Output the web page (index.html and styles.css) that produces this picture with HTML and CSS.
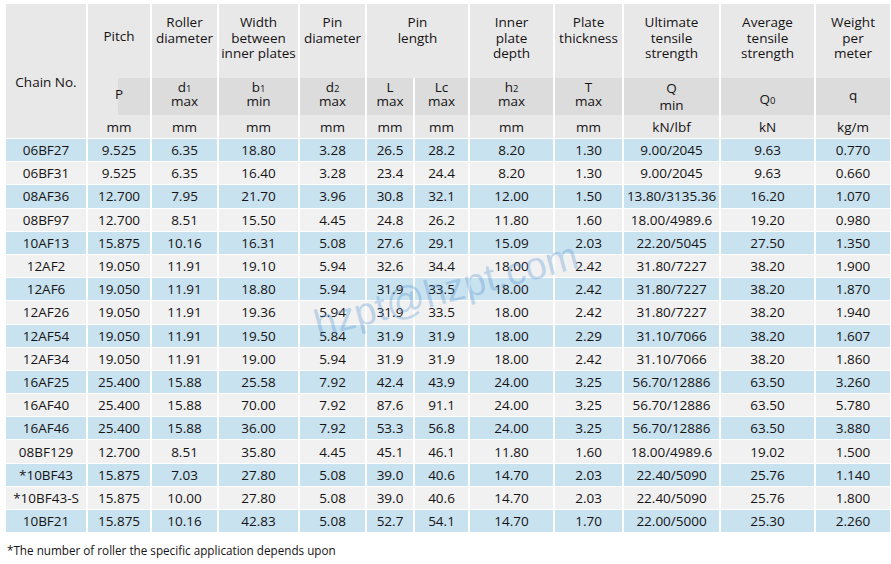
FILE: index.html
```html
<!DOCTYPE html>
<html lang="en">
<head>
<meta charset="utf-8">
<title>Chain specifications</title>
<link rel="stylesheet" href="styles.css">
</head>
<body>
<div class="page">
  <table class="spec">
    <colgroup>
      <col class="c-chain"><col class="c-pitch"><col class="c-roller"><col class="c-width"><col class="c-pin"><col class="c-l"><col class="c-lc"><col class="c-inner"><col class="c-plate"><col class="c-ult"><col class="c-avg"><col class="c-weight">
    </colgroup>
    <thead>
      <tr class="r-title">
        <th rowspan="3" class="chain">Chain No.</th>
        <th class="pitch">Pitch</th>
        <th>Roller<br>diameter</th>
        <th>Width<br>between<br>inner plates</th>
        <th>Pin<br>diameter</th>
        <th colspan="2">Pin<br>length</th>
        <th>Inner<br>plate<br>depth</th>
        <th>Plate<br>thickness</th>
        <th>Ultimate<br>tensile<br>strength</th>
        <th>Average<br>tensile<br>strength</th>
        <th class="last">Weight<br>per<br>meter</th>
      </tr>
      <tr class="r-sym">
        <th class="sym-p">P</th>
        <th>d<sub>1</sub><br>max</th>
        <th>b<sub>1</sub><br>min</th>
        <th>d<sub>2</sub><br>max</th>
        <th>L<br>max</th>
        <th>Lc<br>max</th>
        <th>h<sub>2</sub><br>max</th>
        <th>T<br>max</th>
        <th class="sym-q">Q<br>min</th>
        <th class="sym-q0">Q<sub>0</sub></th>
        <th class="sym-lq last">q</th>
      </tr>
      <tr class="r-unit">
        <th>mm</th><th>mm</th><th>mm</th><th>mm</th><th>mm</th><th>mm</th><th>mm</th><th>mm</th><th>kN/lbf</th><th>kN</th><th class="last">kg/m</th>
      </tr>
    </thead>
    <tbody>
      <tr><td>06BF27</td><td>9.525</td><td>6.35</td><td>18.80</td><td>3.28</td><td>26.5</td><td>28.2</td><td>8.20</td><td>1.30</td><td>9.00/2045</td><td>9.63</td><td>0.770</td></tr>
      <tr><td>06BF31</td><td>9.525</td><td>6.35</td><td>16.40</td><td>3.28</td><td>23.4</td><td>24.4</td><td>8.20</td><td>1.30</td><td>9.00/2045</td><td>9.63</td><td>0.660</td></tr>
      <tr><td>08AF36</td><td>12.700</td><td>7.95</td><td>21.70</td><td>3.96</td><td>30.8</td><td>32.1</td><td>12.00</td><td>1.50</td><td>13.80/3135.36</td><td>16.20</td><td>1.070</td></tr>
      <tr><td>08BF97</td><td>12.700</td><td>8.51</td><td>15.50</td><td>4.45</td><td>24.8</td><td>26.2</td><td>11.80</td><td>1.60</td><td>18.00/4989.6</td><td>19.20</td><td>0.980</td></tr>
      <tr><td>10AF13</td><td>15.875</td><td>10.16</td><td>16.31</td><td>5.08</td><td>27.6</td><td>29.1</td><td>15.09</td><td>2.03</td><td>22.20/5045</td><td>27.50</td><td>1.350</td></tr>
      <tr><td>12AF2</td><td>19.050</td><td>11.91</td><td>19.10</td><td>5.94</td><td>32.6</td><td>34.4</td><td>18.00</td><td>2.42</td><td>31.80/7227</td><td>38.20</td><td>1.900</td></tr>
      <tr><td>12AF6</td><td>19.050</td><td>11.91</td><td>18.80</td><td>5.94</td><td>31.9</td><td>33.5</td><td>18.00</td><td>2.42</td><td>31.80/7227</td><td>38.20</td><td>1.870</td></tr>
      <tr><td>12AF26</td><td>19.050</td><td>11.91</td><td>19.36</td><td>5.94</td><td>31.9</td><td>33.5</td><td>18.00</td><td>2.42</td><td>31.80/7227</td><td>38.20</td><td>1.940</td></tr>
      <tr><td>12AF54</td><td>19.050</td><td>11.91</td><td>19.50</td><td>5.84</td><td>31.9</td><td>31.9</td><td>18.00</td><td>2.29</td><td>31.10/7066</td><td>38.20</td><td>1.607</td></tr>
      <tr><td>12AF34</td><td>19.050</td><td>11.91</td><td>19.00</td><td>5.94</td><td>31.9</td><td>31.9</td><td>18.00</td><td>2.42</td><td>31.10/7066</td><td>38.20</td><td>1.860</td></tr>
      <tr><td>16AF25</td><td>25.400</td><td>15.88</td><td>25.58</td><td>7.92</td><td>42.4</td><td>43.9</td><td>24.00</td><td>3.25</td><td>56.70/12886</td><td>63.50</td><td>3.260</td></tr>
      <tr><td>16AF40</td><td>25.400</td><td>15.88</td><td>70.00</td><td>7.92</td><td>87.6</td><td>91.1</td><td>24.00</td><td>3.25</td><td>56.70/12886</td><td>63.50</td><td>5.780</td></tr>
      <tr><td>16AF46</td><td>25.400</td><td>15.88</td><td>36.00</td><td>7.92</td><td>53.3</td><td>56.8</td><td>24.00</td><td>3.25</td><td>56.70/12886</td><td>63.50</td><td>3.880</td></tr>
      <tr><td>08BF129</td><td>12.700</td><td>8.51</td><td>35.80</td><td>4.45</td><td>45.1</td><td>46.1</td><td>11.80</td><td>1.60</td><td>18.00/4989.6</td><td>19.02</td><td>1.500</td></tr>
      <tr><td>*10BF43</td><td>15.875</td><td>7.03</td><td>27.80</td><td>5.08</td><td>39.0</td><td>40.6</td><td>14.70</td><td>2.03</td><td>22.40/5090</td><td>25.76</td><td>1.140</td></tr>
      <tr><td>*10BF43-S</td><td>15.875</td><td>10.00</td><td>27.80</td><td>5.08</td><td>39.0</td><td>40.6</td><td>14.70</td><td>2.03</td><td>22.40/5090</td><td>25.76</td><td>1.800</td></tr>
      <tr><td>10BF21</td><td>15.875</td><td>10.16</td><td>42.83</td><td>5.08</td><td>52.7</td><td>54.1</td><td>14.70</td><td>1.70</td><td>22.00/5000</td><td>25.30</td><td>2.260</td></tr>
    </tbody>
  </table>
  <p class="note">*The number of roller the specific application depends upon</p>
  <div class="watermark">hzpt@hzpt.com</div>
</div>
</body>
</html>
```

FILE: styles.css
```css
html, body {
  margin: 0;
  padding: 0;
  background: #ffffff;
}

body {
  font-family: "Open Sans", "Noto Sans", sans-serif;
  color: #161314;
}

.page {
  position: relative;
  padding: 4px 1px 0 6px;
}

.spec {
  border-collapse: separate;
  border-spacing: 0;
  table-layout: fixed;
  width: 884px;
  font-size: 13.5px;
}

.c-chain { width: 82px; }
.c-pitch { width: 64px; }
.c-roller { width: 67px; }
.c-width { width: 81px; }
.c-pin { width: 67px; }
.c-l { width: 48px; }
.c-lc { width: 55px; }
.c-inner { width: 85px; }
.c-plate { width: 69px; }
.c-ult { width: 97px; }
.c-avg { width: 95px; }
.c-weight { width: 74px; }

.spec th,
.spec td {
  padding: 0;
  text-align: center;
  font-weight: normal;
  border-right: 2px solid #ffffff;
  white-space: nowrap;
}

.spec th.last,
.spec td:last-child {
  border-right: 0;
}

.spec sub {
  font-size: 9.5px;
  vertical-align: 0;
  line-height: 0;
}

/* header: title row */
.r-title { height: 74px; }
.r-title th {
  background: #e8e8e8;
  vertical-align: top;
  padding-top: 11px;
  line-height: 15.5px;
}
.r-title th.pitch { padding-top: 25px; }

.spec th.chain {
  background: #e8e8e8;
  vertical-align: top;
  padding-top: 70px;
  line-height: 16px;
}

/* header: symbol row */
.r-sym { height: 37px; }
.r-sym th {
  background: #dcdcdc;
  vertical-align: top;
  padding-top: 3px;
  line-height: 13.5px;
}
.r-sym th.sym-p {
  background: linear-gradient(to right, #e8e8e8 30px, #dcdcdc 30px);
  padding-top: 8px;
  line-height: 16px;
}
.r-sym th.sym-q {
  padding-top: 2px;
  line-height: 17px;
}
.r-sym th.sym-q0 {
  padding-top: 13px;
  line-height: 16px;
}
.r-sym th.sym-lq {
  padding-top: 9px;
  line-height: 16px;
}

/* header: unit row */
.r-unit { height: 23px; }
.r-unit th {
  background: #e8e8e8;
  vertical-align: middle;
  line-height: 16px;
}

/* body rows */
.spec tbody tr { height: 23.2px; }
.spec tbody td {
  border-top: 1px solid #ffffff;
  line-height: 20px;
  vertical-align: middle;
  background: #f1f1f1;
}
.spec tbody tr:nth-child(odd) td {
  background: #c9e2ef;
}

.note {
  margin: 10px 0 0 1px;
  font-size: 11.7px;
  line-height: 16px;
}

.watermark {
  position: absolute;
  left: 446px;
  top: 290px;
  transform: translate(-50%, -50%) rotate(-15deg);
  font-family: "Liberation Sans", Arial, sans-serif;
  font-size: 39px;
  color: rgba(80, 145, 210, 0.32);
  white-space: nowrap;
  pointer-events: none;
}
```
